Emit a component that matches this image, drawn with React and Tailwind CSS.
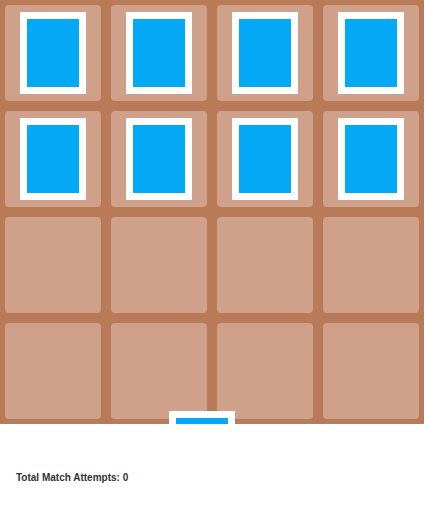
export default function App() {
  const cards = Array.from({ length: 16 }, (_, i) => i < 8);

  return (
    <div className="w-[424px] bg-white" style={{ fontFamily: '"Liberation Sans", Arial, sans-serif' }}>
      {/* Board */}
      <div className="relative overflow-hidden bg-[#b97b57] p-[5px]">
        <div className="grid grid-cols-4 gap-[10px]">
          {cards.map((hasCard, i) => (
            <div
              key={i}
              className="flex h-[96px] items-center justify-center rounded-[4px] bg-[#cfa08a]"
            >
              {hasCard && (
                <div className="h-[82px] w-[66px] bg-white p-[7px]">
                  <div className="h-full w-full bg-[#03a9f4]" />
                </div>
              )}
            </div>
          ))}
        </div>

        {/* Deck card peeking in */}
        <div className="absolute left-[169px] top-[411px] h-[82px] w-[66px] bg-white p-[7px]">
          <div className="h-full w-full bg-[#03a9f4]" />
        </div>
      </div>

      {/* Score */}
      <div className="px-[16px] pt-[48px] pb-[40px]">
        <p className="text-[10px] font-bold leading-[12px] text-[#333]">
          Total Match Attempts: 0
        </p>
      </div>
    </div>
  );
}
